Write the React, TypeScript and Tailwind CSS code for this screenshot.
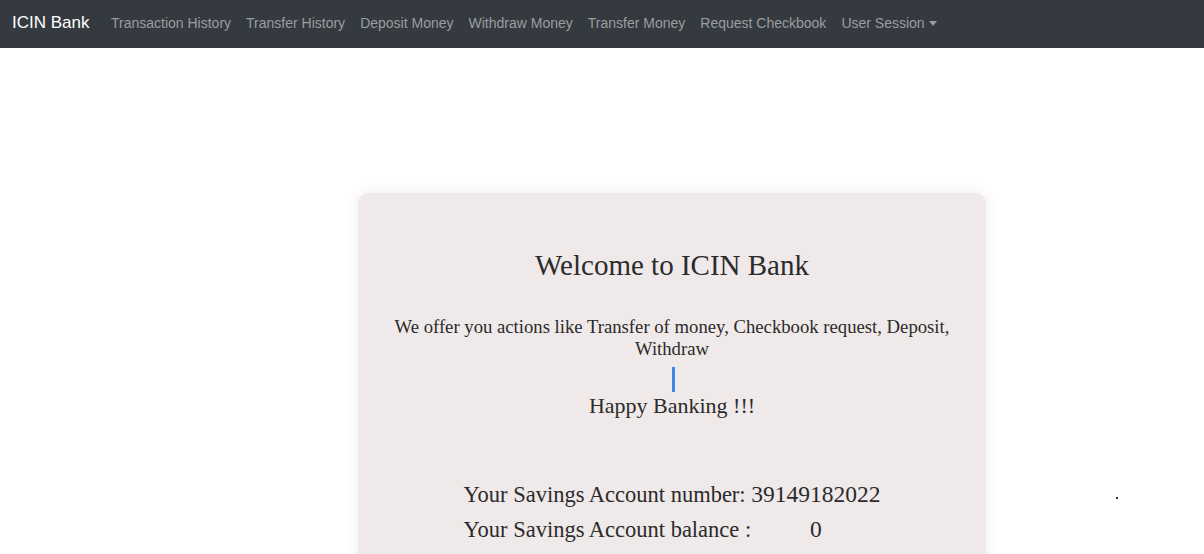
import React from "react";

const links = [
  "Transaction History",
  "Transfer History",
  "Deposit Money",
  "Withdraw Money",
  "Transfer Money",
  "Request Checkbook",
];

export default function App() {
  return (
    <div className="relative min-h-[554px] w-full bg-white overflow-hidden">
      <nav className="flex h-[48px] items-center bg-[#343a40] pb-[2px] pl-[12px] font-['Liberation_Sans',Arial,sans-serif]">
        <span className="mr-[14px] text-[17px] text-white">ICIN Bank</span>
        {links.map((l) => (
          <span key={l} className="px-[7.5px] text-[14px] text-[#9b9d9f]">
            {l}
          </span>
        ))}
        <span className="flex items-center px-[7.5px] text-[14px] text-[#9b9d9f]">
          User Session
          <span className="ml-[4px] mt-[1px] h-0 w-0 border-x-[4px] border-t-[5px] border-x-transparent border-t-[#9b9d9f]" />
        </span>
      </nav>

      <div className="pl-[358px] pt-[145px]">
        <div className="w-[628px] rounded-[10px] bg-[#efe9e9] pb-[40px] pt-[54px] text-center text-[#2b2b2b] font-['Liberation_Serif','Times_New_Roman',serif] shadow-[0_0_14px_rgba(0,0,0,0.08)]">
          <h1 className="text-[29px] leading-[36px]">Welcome to ICIN Bank</h1>
          <p className="mx-auto mt-[33px] w-[580px] text-[18.7px] leading-[22px]">
            We offer you actions like Transfer of money, Checkbook request, Deposit, Withdraw
          </p>
          <div className="mx-auto mt-[7px] h-[25px] w-[3px] translate-x-[1px] bg-[#3d85e6]" />
          <p className="mt-[0px] text-[22px] leading-[28px]">Happy Banking !!!</p>
          <table className="mx-auto mt-[57px] text-[22.5px]">
            <tbody>
              <tr className="h-[35px]">
                <td className="text-left">Your Savings Account number:</td>
                <td className="text-center text-[23.5px]">39149182022</td>
              </tr>
              <tr className="h-[35px]">
                <td className="text-left">Your Savings Account balance :</td>
                <td className="text-center text-[23.5px]">0</td>
              </tr>
            </tbody>
          </table>
        </div>
      </div>

      <span className="absolute left-[1116px] top-[497px] h-[2px] w-[2px] bg-[#333]" />
    </div>
  );
}
